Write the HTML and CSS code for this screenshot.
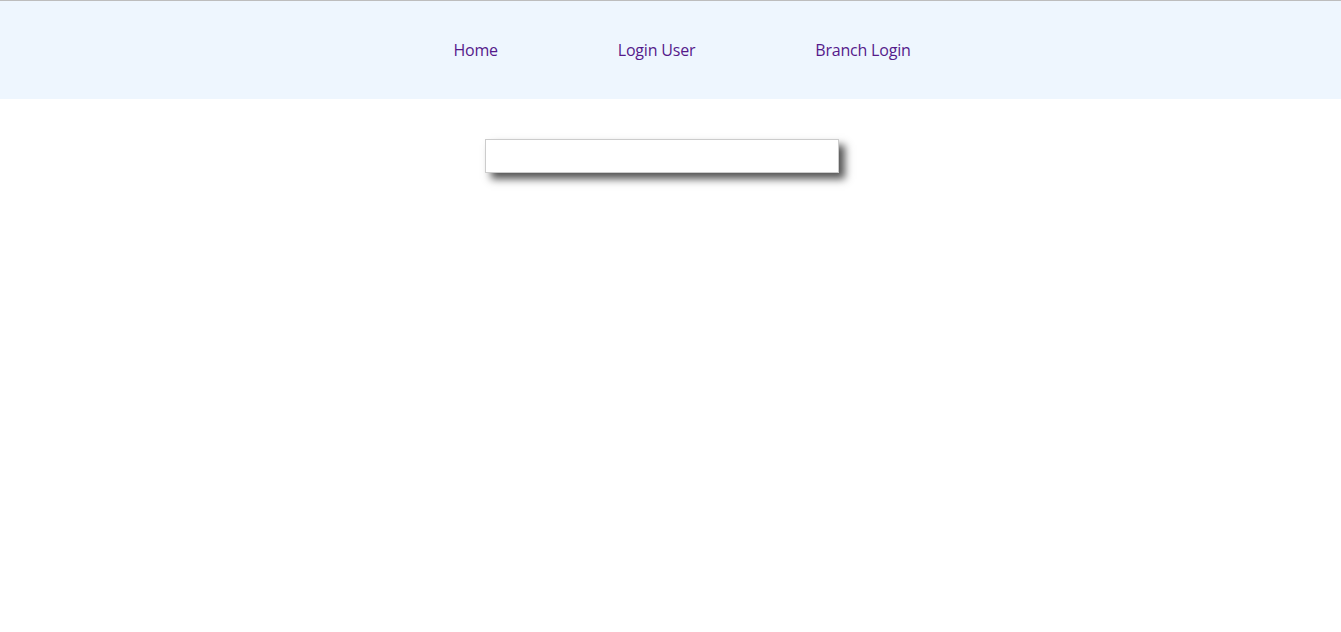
FILE: index.html
```html
<!DOCTYPE html>
<html>
<head>
<meta charset="utf-8">
<link rel="stylesheet" href="styles.css">
</head>
<body>
<header class="topbar">
  <nav class="nav">
    <a class="nav-link" href="#">Home</a>
    <a class="nav-link" href="#">Login User</a>
    <a class="nav-link" href="#">Branch Login</a>
  </nav>
</header>
<main class="main">
  <div class="panel"></div>
</main>
</body>
</html>
```
FILE: styles.css
```css
html, body {
  margin: 0;
  padding: 0;
  background: #ffffff;
  font-family: "Open Sans", "Noto Sans", sans-serif;
}
body {
  min-height: 100vh;
}
.topbar {
  border-top: 1px solid #bdbdbd;
  background: #eef6fe;
  height: 98px;
}
.nav {
  display: flex;
  justify-content: center;
  align-items: center;
  height: 100%;
  gap: 120px;
  padding-left: 23px;
}
.nav-link {
  color: #551a8b;
  text-decoration: none;
  font-size: 16px;
  letter-spacing: -0.2px;
}
.main {
  display: flex;
  justify-content: center;
  padding-top: 40px;
  padding-right: 18px;
  padding-bottom: 40px;
}
.panel {
  width: 352px;
  height: 32px;
  border: 1px solid #cccccc;
  background: #fff;
  box-shadow: 6px 6px 8px #555;
}
```
